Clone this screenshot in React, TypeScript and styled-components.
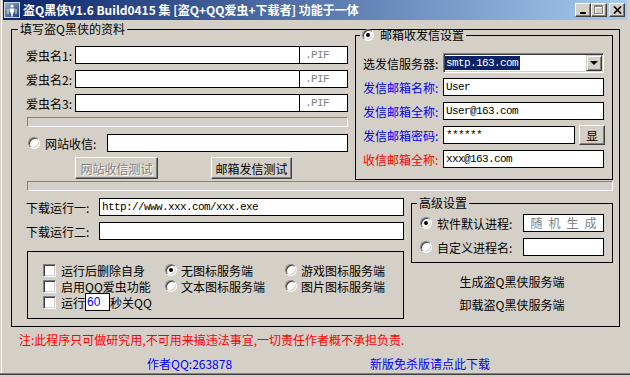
import React from 'react';
import styled, { createGlobalStyle, css } from 'styled-components';

const GlobalStyle = createGlobalStyle`
  html, body {
    margin: 0;
    padding: 0;
    background: #d4d0c8;
  }
  * {
    box-sizing: border-box;
  }
`;

const Window = styled.div`
  width: 630px;
  height: 377px;
  overflow: hidden;
  background: #d4d0c8;
  display: flex;
  flex-direction: column;
  font-family: "Noto Sans CJK SC", "Liberation Sans", sans-serif;
  font-size: 12px;
  color: #000;
  box-shadow: inset 0 -2px #d4d0c8, inset 0 -3px #404040, inset 0 -4px #808080,
    inset 1px 0 #d4d0c8, inset 2px 0 #fff;
`;

const TitleBar = styled.div`
  height: 20px;
  margin: 0 3px;
  padding: 0 2px 0 1px;
  display: flex;
  align-items: center;
  background: linear-gradient(to right, #0a246a, #a6caf0);
`;

const TitleText = styled.div`
  flex: 1;
  margin-left: 3px;
  color: #fff;
  font-weight: bold;
  font-size: 12px;
  line-height: 14px;
  white-space: nowrap;
`;

const CapButtons = styled.div`
  display: flex;
  align-items: center;
`;

const CapButton = styled.div<{ $gap?: number }>`
  width: 16px;
  height: 14px;
  margin-left: ${p => p.$gap ?? 0}px;
  background: #d4d0c8;
  border: 1px solid;
  border-color: #fff #404040 #404040 #fff;
  box-shadow: inset -1px -1px #808080;
  display: flex;
  align-items: center;
  justify-content: center;
`;

const GroupBox = styled.fieldset`
  margin: 0;
  padding: 0;
  min-width: 0;
  border: 1px solid #000;
`;

const Legend = styled.legend<{ $offset: number }>`
  width: fit-content;
  margin-left: ${p => p.$offset}px;
  padding: 0 2px;
  height: 14px;
  line-height: 14px;
  display: flex;
  align-items: center;
  gap: 6px;
  white-space: nowrap;
`;

const GroupBody = styled.div<{ $pad: string }>`
  padding: ${p => p.$pad};
`;

const MainGroup = styled(GroupBox)`
  width: 609px;
  margin: 2px 0 0 11px;
`;

const TopSection = styled.div`
  display: flex;
  align-items: flex-start;
`;

const LeftCol = styled.div<{ $w: number; $pt: number }>`
  width: ${p => p.$w}px;
  padding: ${p => p.$pt}px 0 0 14px;
  display: flex;
  flex-direction: column;
`;

const Row = styled.div<{ $mt?: number }>`
  height: 24px;
  margin-top: ${p => p.$mt ?? 0}px;
  display: flex;
  align-items: center;
  white-space: nowrap;
`;

const Label = styled.span<{ $w?: number; $color?: string }>`
  width: ${p => (p.$w ? `${p.$w}px` : 'auto')};
  flex: none;
  color: ${p => p.$color ?? '#000'};
  white-space: nowrap;
`;

const Input = styled.input<{ $w: number; $muted?: boolean; $joined?: boolean }>`
  width: ${p => p.$w}px;
  height: 18px;
  flex: none;
  margin: 0;
  padding: 0 0 0 ${p => (p.$muted ? 5 : 2)}px;
  border: 1px solid #000;
  ${p => p.$joined && css`border-left: none;`}
  background: #fff;
  outline: none;
  font-family: "Liberation Mono", monospace;
  font-size: 11px;
  letter-spacing: -0.6px;
  color: ${p => (p.$muted ? '#808080' : '#000')};
`;

const SpacedBox = styled.div<{ $w: number }>`
  width: ${p => p.$w}px;
  height: 18px;
  flex: none;
  border: 1px solid #000;
  background: #fff;
  color: #808080;
  letter-spacing: 6px;
  text-indent: 6px;
  text-align: center;
  line-height: 16px;
`;

const Sunken = styled.div<{ $w: number; $ml: number; $mt: number }>`
  width: ${p => p.$w}px;
  height: 10px;
  margin: ${p => p.$mt}px 0 0 ${p => p.$ml}px;
  border: 1px solid;
  border-color: #808080 #fff #fff #808080;
`;

const RadioMark = styled.span<{ $on?: boolean; $ml?: number; $mr?: number }>`
  position: relative;
  width: 12px;
  height: 12px;
  flex: none;
  margin: 0 ${p => p.$mr ?? 0}px 0 ${p => p.$ml ?? 0}px;
  border-radius: 50%;
  background: #fff;
  border: 1px solid;
  border-color: #808080 #fff #fff #808080;
  box-shadow: inset 1px 1px #404040, inset -1px -1px #d4d0c8;
  ${p =>
    p.$on &&
    css`
      &::after {
        content: '';
        position: absolute;
        left: 3px;
        top: 3px;
        width: 4px;
        height: 4px;
        border-radius: 50%;
        background: #000;
      }
    `}
`;

const CheckMark = styled.span`
  width: 13px;
  height: 13px;
  flex: none;
  background: #fff;
  border: 1px solid;
  border-color: #808080 #fff #fff #808080;
  box-shadow: inset 1px 1px #404040, inset -1px -1px #d4d0c8;
`;

const ButtonRow = styled.div`
  margin-top: 2px;
  padding-left: 49px;
  display: flex;
  gap: 53px;
`;

const Button = styled.button<{ $w: number; $h?: number; $ml?: number }>`
  width: ${p => p.$w}px;
  height: ${p => p.$h ?? 22}px;
  flex: none;
  margin: 0 0 0 ${p => p.$ml ?? 0}px;
  padding: 0;
  background: #d4d0c8;
  border: 1px solid;
  border-color: #fff #404040 #404040 #fff;
  box-shadow: inset -1px -1px #808080;
  font-family: inherit;
  font-size: 12px;
  color: #000;
  &:disabled {
    color: #808080;
    text-shadow: 1px 1px #fff;
  }
`;

const MailGroup = styled(GroupBox)`
  width: 258px;
  margin: -8px 0 0 7px;
`;

const ComboBox = styled.div`
  width: 161px;
  height: 20px;
  flex: none;
  display: flex;
  align-items: center;
  padding: 0 0 0 1px;
  background: #fff;
  border: 1px solid;
  border-color: #808080 #fff #fff #808080;
  box-shadow: inset 1px 1px #404040, inset -1px -1px #d4d0c8;
`;

const Selected = styled.span`
  height: 14px;
  line-height: 14px;
  padding: 0 2px 0 1px;
  background: #0a246a;
  color: #fff;
  font-family: "Liberation Mono", monospace;
  font-size: 11px;
  letter-spacing: -0.6px;
`;

const DropButton = styled.span`
  width: 16px;
  height: 16px;
  margin: 0 1px 0 auto;
  background: #d4d0c8;
  border: 1px solid;
  border-color: #d4d0c8 #404040 #404040 #d4d0c8;
  box-shadow: inset 1px 1px #fff, inset -1px -1px #808080;
  display: flex;
  align-items: center;
  justify-content: center;
  &::after {
    content: '';
    border-left: 4px solid transparent;
    border-right: 4px solid transparent;
    border-top: 4px solid #000;
  }
`;

const BottomSection = styled.div`
  display: flex;
  align-items: flex-start;
  padding-left: 14px;
`;

const DownloadCol = styled.div`
  width: 378px;
  padding: 4px 0 7px;
  display: flex;
  flex-direction: column;
`;

const OptionsBox = styled.div`
  width: 377px;
  height: 68px;
  margin: 8px 0 0 1px;
  border: 1px solid #000;
  padding: 10px 0 0 15px;
  display: grid;
  grid-template-columns: 122px 120px auto;
  grid-auto-rows: 16px;
`;

const Option = styled.label<{ $gap: number }>`
  display: flex;
  align-items: center;
  gap: ${p => p.$gap}px;
  white-space: nowrap;
`;

const SecondsBox = styled.span`
  width: 25px;
  height: 18px;
  margin: 0 -5px 0 -5px;
  flex: none;
  border: 1px solid #000;
  background: #fff;
  color: #0000ff;
  font-family: "Liberation Sans", sans-serif;
  font-size: 12px;
  line-height: 16px;
  padding-left: 1px;
`;

const SideCol = styled.div`
  width: 202px;
  margin: 5px 0 0 7px;
  display: flex;
  flex-direction: column;
`;

const AdvGroup = styled(GroupBox)`
  width: 202px;
`;

const FlatButton = styled.button<{ $mt?: number }>`
  height: 22px;
  margin: ${p => p.$mt ?? 0}px 0 0;
  padding: 0;
  border: none;
  background: none;
  font-family: inherit;
  font-size: 12px;
  color: #000;
`;

const Note = styled.div`
  margin: 6px 0 0 19px;
  height: 14px;
  line-height: 14px;
  color: #ff0000;
  white-space: nowrap;
`;

const Footer = styled.div`
  margin-top: 10px;
  height: 14px;
  line-height: 14px;
  padding-left: 147px;
  display: flex;
  color: #0000ff;
`;

const FooterLink = styled.span<{ $w?: number }>`
  width: ${p => (p.$w ? `${p.$w}px` : 'auto')};
  white-space: nowrap;
  cursor: pointer;
`;

const AppIcon = () => (
  <svg width="16" height="16" viewBox="0 0 16 16">
    <defs>
      <linearGradient id="ic" x1="0" y1="0" x2="1" y2="1">
        <stop offset="0" stopColor="#9fb6d8" />
        <stop offset="1" stopColor="#1d3a70" />
      </linearGradient>
    </defs>
    <rect x="0.5" y="0.5" width="15" height="15" fill="url(#ic)" stroke="#c8d4e4" />
    <circle cx="8" cy="4" r="1.6" fill="#fff" />
    <path d="M5.5 6.5h5l-.6 4h-.9l-.3 4h-1.4l-.3-4h-.9z" fill="#fff" />
    <path d="M4 7v5M12 7v5" stroke="#dfe8f4" strokeWidth="1" />
  </svg>
);

const mailRows: { label: string; color: string; value: string }[] = [
  { label: '发信邮箱名称:', color: '#0000ff', value: 'User' },
  { label: '发信邮箱全称:', color: '#0000ff', value: 'User@163.com' },
];

const options: { kind: 'check' | 'radio'; text: string; on?: boolean }[] = [
  { kind: 'check', text: '运行后删除自身' },
  { kind: 'radio', text: '无图标服务端', on: true },
  { kind: 'radio', text: '游戏图标服务端' },
  { kind: 'check', text: '启用QQ爱虫功能' },
  { kind: 'radio', text: '文本图标服务端' },
  { kind: 'radio', text: '图片图标服务端' },
];

export default function App() {
  return (
    <>
      <GlobalStyle />
      <Window>
        <TitleBar>
          <AppIcon />
          <TitleText>盗Q黑侠V1.6 Build0415 集 [盗Q+QQ爱虫+下载者] 功能于一体</TitleText>
          <CapButtons>
            <CapButton>
              <svg width="8" height="8" viewBox="0 0 8 8">
                <rect x="1" y="6" width="6" height="2" fill="#000" />
              </svg>
            </CapButton>
            <CapButton>
              <svg width="10" height="10" viewBox="0 0 10 10">
                <path d="M1.5 1.5h8v8h-8z M1.5 2.5h8" fill="none" stroke="#fff" />
                <path d="M0.5 0.5h8v8h-8z M0.5 1.5h8" fill="none" stroke="#808080" />
              </svg>
            </CapButton>
            <CapButton $gap={2}>
              <svg width="9" height="8" viewBox="0 0 9 8">
                <path d="M1 0.5l7 7M8 0.5l-7 7" stroke="#000" strokeWidth="1.6" />
              </svg>
            </CapButton>
          </CapButtons>
        </TitleBar>

        <MainGroup>
          <Legend $offset={6}>填写盗Q黑侠的资料</Legend>
          <TopSection>
            <LeftCol $w={336} $pt={7}>
              {[1, 2, 3].map(n => (
                <Row key={n}>
                  <Label $w={49}>爱虫名{n}:</Label>
                  <Input $w={225} readOnly defaultValue="" />
                  <Input $w={48} $muted $joined readOnly defaultValue=".PIF" />
                </Row>
              ))}
              <Sunken $w={321} $ml={1} $mt={2} />
              <Row $mt={4}>
                <RadioMark $ml={2} $mr={5} />
                <Label $w={62}>网站收信:</Label>
                <Input $w={241} readOnly defaultValue="" />
              </Row>
              <ButtonRow>
                <Button $w={83} disabled>网站收信测试</Button>
                <Button $w={81}>邮箱发信测试</Button>
              </ButtonRow>
            </LeftCol>

            <MailGroup>
              <Legend $offset={4}>
                <RadioMark $on />
                邮箱收发信设置
              </Legend>
              <GroupBody $pad="9px 0 8px 7px">
                <Row>
                  <Label $w={80}>选发信服务器:</Label>
                  <ComboBox>
                    <Selected>smtp.163.com</Selected>
                    <DropButton />
                  </ComboBox>
                </Row>
                {mailRows.map(r => (
                  <Row key={r.label}>
                    <Label $w={80} $color={r.color}>{r.label}</Label>
                    <Input $w={161} readOnly defaultValue={r.value} />
                  </Row>
                ))}
                <Row>
                  <Label $w={80} $color="#0000ff">发信邮箱密码:</Label>
                  <Input $w={132} readOnly defaultValue="******" />
                  <Button $w={26} $h={20} $ml={4}>显</Button>
                </Row>
                <Row>
                  <Label $w={80} $color="#ff0000">收信邮箱全称:</Label>
                  <Input $w={161} readOnly defaultValue="xxx@163.com" />
                </Row>
              </GroupBody>
            </MailGroup>
          </TopSection>

          <Sunken $w={586} $ml={15} $mt={1} />

          <BottomSection>
            <DownloadCol>
              <Row>
                <Label $w={73}>下载运行一:</Label>
                <Input $w={305} readOnly defaultValue="http://www.xxx.com/xxx.exe" />
              </Row>
              <Row>
                <Label $w={73}>下载运行二:</Label>
                <Input $w={305} readOnly defaultValue="" />
              </Row>
              <OptionsBox>
                {options.map(o => (
                  <Option key={o.text} $gap={o.kind === 'check' ? 5 : 4}>
                    {o.kind === 'check' ? <CheckMark /> : <RadioMark $on={o.on} />}
                    {o.text}
                  </Option>
                ))}
                <Option $gap={5}>
                  <CheckMark />
                  <span>运行</span>
                  <SecondsBox>60</SecondsBox>
                  <span>秒关QQ</span>
                </Option>
              </OptionsBox>
            </DownloadCol>

            <SideCol>
              <AdvGroup>
                <Legend $offset={5}>高级设置</Legend>
                <GroupBody $pad="1px 0 3px 8px">
                  <Row>
                    <RadioMark $on $mr={5} />
                    <Label $w={86}>软件默认进程:</Label>
                    <SpacedBox $w={81}>随机生成</SpacedBox>
                  </Row>
                  <Row>
                    <RadioMark $mr={5} />
                    <Label $w={86}>自定义进程名:</Label>
                    <Input $w={81} readOnly defaultValue="" />
                  </Row>
                </GroupBody>
              </AdvGroup>
              <FlatButton $mt={7}>生成盗Q黑侠服务端</FlatButton>
              <FlatButton $mt={1}>卸载盗Q黑侠服务端</FlatButton>
            </SideCol>
          </BottomSection>
        </MainGroup>

        <Note>注:此程序只可做研究用,不可用来搞违法事宜,一切责任作者概不承担负责.</Note>
        <Footer>
          <FooterLink $w={223}>作者QQ:263878</FooterLink>
          <FooterLink>新版免杀版请点此下载</FooterLink>
        </Footer>
      </Window>
    </>
  );
}
